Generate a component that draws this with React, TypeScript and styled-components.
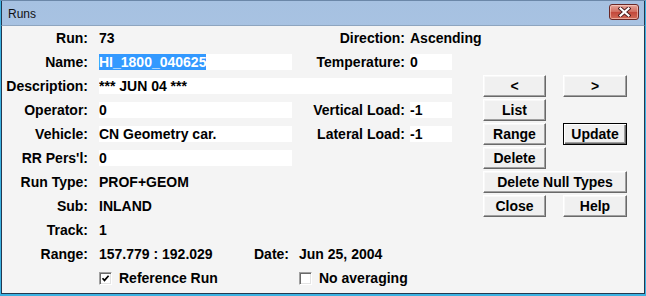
import { FC, ReactNode } from 'react';
import styled, { createGlobalStyle } from 'styled-components';

const GlobalStyle = createGlobalStyle`
  html, body {
    margin: 0;
    padding: 0;
    overflow: hidden;
    background: #ffffff;
  }
`;

const App: FC = () => (
  <>
    <GlobalStyle />
    <Window>
      <TitleBar>
        <Title>Runs</Title>
        <CloseButton aria-label="Close">
          <svg width="13" height="10" viewBox="0 0 13 10">
            <path d="M2.5 1.5 L10.5 8.5 M10.5 1.5 L2.5 8.5" stroke="#4a1c1c" strokeWidth="4" strokeLinecap="square" />
            <path d="M2.5 1.5 L10.5 8.5 M10.5 1.5 L2.5 8.5" stroke="#ffffff" strokeWidth="2.2" strokeLinecap="square" />
          </svg>
        </CloseButton>
      </TitleBar>
      <Body>
        <Form>
          <Label>Run:</Label>
          <Value>73</Value>
          <RightLabel>Direction:</RightLabel>
          <Value>Ascending</Value>

          <Label>Name:</Label>
          <Field><Selected>HI_1800_040625</Selected></Field>
          <RightLabel>Temperature:</RightLabel>
          <Field>0</Field>

          <Label>Description:</Label>
          <Field $span={3}>*** JUN 04 ***</Field>

          <Label>Operator:</Label>
          <Field>0</Field>
          <RightLabel>Vertical Load:</RightLabel>
          <Field>-1</Field>

          <Label>Vehicle:</Label>
          <Field>CN Geometry car.</Field>
          <RightLabel>Lateral Load:</RightLabel>
          <Field>-1</Field>

          <Label>RR Pers'l:</Label>
          <Field>0</Field>
          <Filler />

          <Label>Run Type:</Label>
          <Value $span={3}>PROF+GEOM</Value>

          <Label>Sub:</Label>
          <Value $span={3}>INLAND</Value>

          <Label>Track:</Label>
          <Value $span={3}>1</Value>

          <Label>Range:</Label>
          <RangeRow>
            <span>157.779 : 192.029</span>
            <span>Date:</span>
            <span>Jun 25, 2004</span>
          </RangeRow>

          <Label />
          <CheckRow>
            <CheckBox checked>Reference Run</CheckBox>
            <CheckBox>No averaging</CheckBox>
          </CheckRow>
        </Form>

        <Buttons>
          <Button>&lt;</Button>
          <Button>&gt;</Button>
          <Button $first>List</Button>
          <Button $first>Range</Button>
          <Button $default>Update</Button>
          <Button $first>Delete</Button>
          <Button $wide>Delete Null Types</Button>
          <Button>Close</Button>
          <Button>Help</Button>
        </Buttons>
      </Body>
    </Window>
  </>
);

const CheckBox: FC<{ checked?: boolean; children: ReactNode }> = ({ checked = false, children }) => (
  <CheckItem>
    <Box>
      {checked && (
        <svg width="9" height="9" viewBox="0 0 9 9">
          <path d="M1.5 4.2 L3.5 6.4 L7.6 1.8" fill="none" stroke="#000" strokeWidth="1.7" />
        </svg>
      )}
    </Box>
    <span>{children}</span>
  </CheckItem>
);

const Window = styled.div`
  box-sizing: border-box;
  width: 646px;
  height: 296px;
  display: flex;
  flex-direction: column;
  border: 1px solid #3cb2e2;
  border-top-color: #6b87a8;
  border-bottom-width: 2px;
  background: linear-gradient(#a6c1e1, #bcd2eb);
  font-family: 'Liberation Sans', Arial, sans-serif;
`;

const TitleBar = styled.div`
  height: 24px;
  display: flex;
  align-items: center;
  justify-content: space-between;
  padding: 0 5px 0 6px;
  border-left: 1px solid #24384f;
  border-right: 1px solid #24384f;
`;

const Title = styled.div`
  font-size: 12px;
  color: #111;
  margin-top: 1px;
`;

const CloseButton = styled.div`
  box-sizing: border-box;
  width: 30px;
  height: 16px;
  margin-top: -2px;
  display: flex;
  align-items: center;
  justify-content: center;
  border: 1px solid #6a2826;
  border-radius: 3px;
  background: linear-gradient(#e6a79b, #d06a5c 50%, #c2473a 51%, #d16a57);
  box-shadow: inset 0 0 0 1px rgba(255, 220, 210, 0.55);
`;

const Body = styled.div`
  flex: 1;
  display: flex;
  align-items: flex-start;
  background: #f4f4f4;
  border: 1px solid #24384f;
  border-top-color: #8ea5bf;
  font-size: 14px;
  font-weight: bold;
  color: #000;
`;

const Form = styled.div`
  display: grid;
  grid-template-columns: 97px 193px 118px 42px;
  grid-auto-rows: 24px;
  align-items: center;
`;

const Label = styled.div`
  text-align: right;
  padding-right: 11px;
  white-space: nowrap;
`;

const RightLabel = styled(Label)`
  padding-right: 5px;
`;

const Value = styled.div<{ $span?: number }>`
  grid-column: span ${({ $span }) => $span ?? 1};
  white-space: nowrap;
`;

const Field = styled(Value)`
  height: 16px;
  line-height: 16px;
  background: #ffffff;
  overflow: hidden;
`;

const Filler = styled.div`
  grid-column: span 2;
`;

const Selected = styled.span`
  display: inline-block;
  height: 16px;
  background: #3399ff;
  color: #ffffff;
`;

const RangeRow = styled.div`
  grid-column: span 3;
  display: grid;
  grid-template-columns: 155px 45px auto;
  white-space: nowrap;
`;

const CheckRow = styled.div`
  grid-column: span 3;
  display: grid;
  grid-template-columns: 200px auto;
`;

const CheckItem = styled.div`
  display: flex;
  align-items: center;
  gap: 7px;
  white-space: nowrap;
`;

const Box = styled.div`
  box-sizing: border-box;
  width: 13px;
  height: 13px;
  display: flex;
  align-items: center;
  justify-content: center;
  background: #ffffff;
  border: 1px solid;
  border-color: #a0a0a0 #ffffff #ffffff #a0a0a0;
  box-shadow: inset 1px 1px #696969, inset -1px -1px #e3e3e3;
`;

const Buttons = styled.div`
  display: grid;
  grid-template-columns: 63px 64px;
  grid-auto-rows: 24px;
  column-gap: 17px;
  align-items: center;
  padding-top: 48px;
  margin-left: 31px;
`;

const Button = styled.div<{ $first?: boolean; $wide?: boolean; $default?: boolean }>`
  box-sizing: border-box;
  height: 22px;
  display: flex;
  align-items: center;
  justify-content: center;
  background: #f0f0f0;
  white-space: nowrap;
  cursor: default;
  ${({ $first }) => ($first ? 'grid-column: 1;' : '')}
  ${({ $wide }) => ($wide ? 'grid-column: span 2;' : '')}
  border: 1px solid;
  border-color: ${({ $default }) => ($default ? '#000 #000 #000 #000' : '#ffffff #696969 #696969 #ffffff')};
  box-shadow: ${({ $default }) => ($default
    ? 'inset 1px 1px #ffffff, inset -1px -1px #696969, inset -2px -2px #a0a0a0'
    : 'inset -1px -1px #a0a0a0, inset 1px 1px #f8f8f8')};
`;

export default App;
